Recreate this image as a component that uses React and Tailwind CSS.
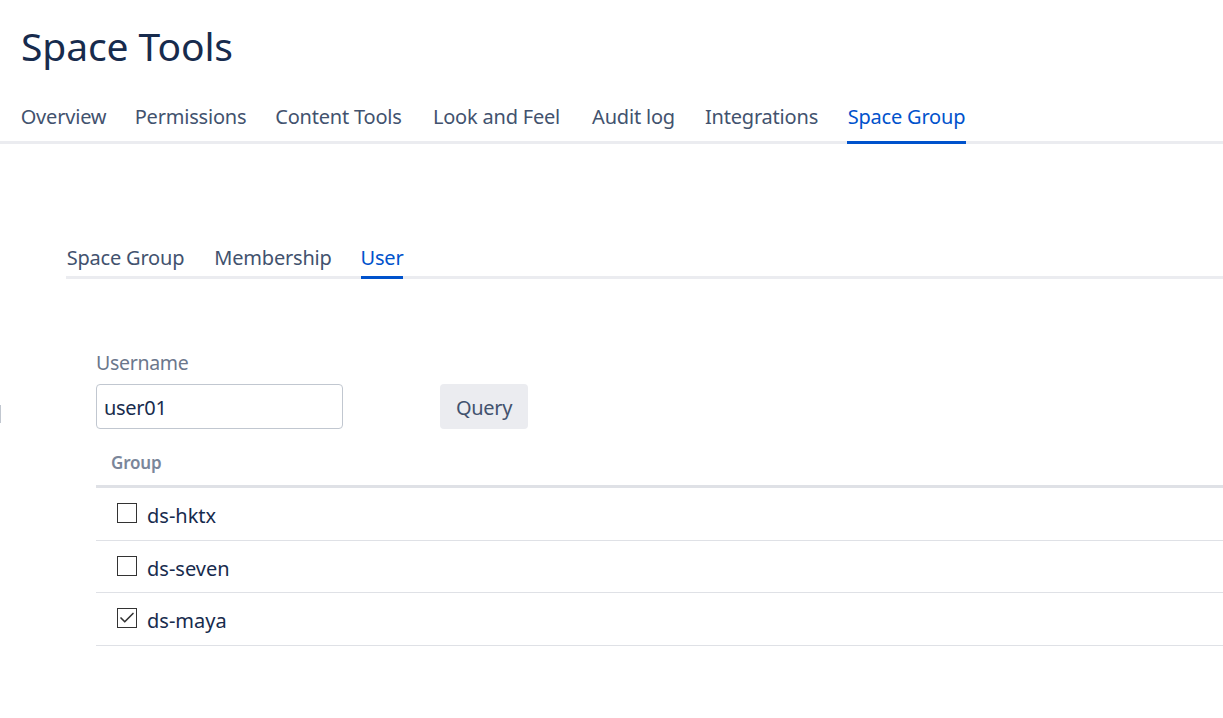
import { Check } from 'lucide-react';

const font = { fontFamily: '"Noto Sans", sans-serif' };

// widths taken from the picture, the fallback font runs a bit different
const mainTabs = [
  { label: 'Overview', width: 'w-[85px]' },
  { label: 'Permissions', width: 'w-[109px]' },
  { label: 'Content Tools', width: 'w-[127px]' },
  { label: 'Look and Feel', width: 'w-[129px]' },
  { label: 'Audit log', width: 'w-[85px]' },
  { label: 'Integrations', width: 'w-[111px]' },
  { label: 'Space Group', width: 'w-[119px]' },
];
const subTabs = [
  { label: 'Space Group', width: 'w-[119px]' },
  { label: 'Membership', width: 'w-[116px]' },
  { label: 'User', width: 'w-[42px]' },
];
const groups = [
  { name: 'ds-hktx', checked: false, height: 'h-[53px]' },
  { name: 'ds-seven', checked: false, height: 'h-[52px]' },
  { name: 'ds-maya', checked: true, height: 'h-[53px]' },
];

function Tabs({ items, active, itemClass, className = '' }) {
  return (
    <div className={`flex gap-[30px] border-b-[3px] border-[#ebecf0] ${className}`}>
      {items.map(item => (
        <div
          key={item.label}
          className={`-mb-[3px] flex justify-center whitespace-nowrap border-b-[3px] text-[20px] leading-[28px] tracking-[-0.2px] ${item.width} ${itemClass} ${
            item.label === active ? 'border-[#0052cc] text-[#0052cc]' : 'border-transparent text-[#42526e]'
          }`}
        >
          {item.label}
        </div>
      ))}
    </div>
  );
}

export default function App() {
  return (
    <div className="relative h-[718px] w-[1223px] overflow-hidden bg-white" style={font}>
      <h1 className="pl-[21px] pt-[19px] text-[39px] leading-[54px] tracking-[-0.1px] text-[#172b4d]">Space Tools</h1>

      <Tabs items={mainTabs} active="Space Group" itemClass="pb-[10px]" className="mt-[30px] pl-[21px]" />

      <div className="pl-[66px] pt-[100px]">
        <Tabs items={subTabs} active="User" itemClass="pb-[4px]" />
      </div>

      <div className="pl-[96px] pt-[70px]">
        <label className="block text-[19.5px] leading-[28px] tracking-[-0.3px] text-[#6b778c]">Username</label>
        <div className="mt-[7px] flex items-start gap-[97px]">
          <input
            readOnly
            value="user01"
            className="h-[45px] w-[247px] rounded-[4px] border border-[#c1c7d0] px-[7px] pt-[2px] text-[20px] tracking-[-0.3px] text-[#172b4d] outline-none"
          />
          <button className="h-[45px] w-[88px] rounded-[4px] bg-[#ebecf0] pt-[2px] text-[20px] tracking-[-0.3px] text-[#42526e]">Query</button>
        </div>

        <div className="flex h-[59px] items-center border-b-[3px] border-[#dfe1e6] pl-[15px] pt-[12px] text-[17px] font-semibold tracking-[-0.2px] text-[#7a869a]">
          Group
        </div>
        {groups.map(group => (
          <div key={group.name} className={`flex items-center gap-[10px] border-b border-[#dfe1e6] pl-[21px] ${group.height}`}>
            <span className="flex h-[20px] w-[20px] -translate-y-[1px] items-center justify-center border border-[#333333] bg-white">
              {group.checked && <Check size={18} strokeWidth={2.2} className="text-[#333333]" />}
            </span>
            <span className="translate-y-[2px] text-[20px] text-[#172b4d]">{group.name}</span>
          </div>
        ))}
      </div>

      <div className="absolute left-0 top-[405px] h-[18px] w-px bg-[#c1c7d0]" />
    </div>
  );
}
